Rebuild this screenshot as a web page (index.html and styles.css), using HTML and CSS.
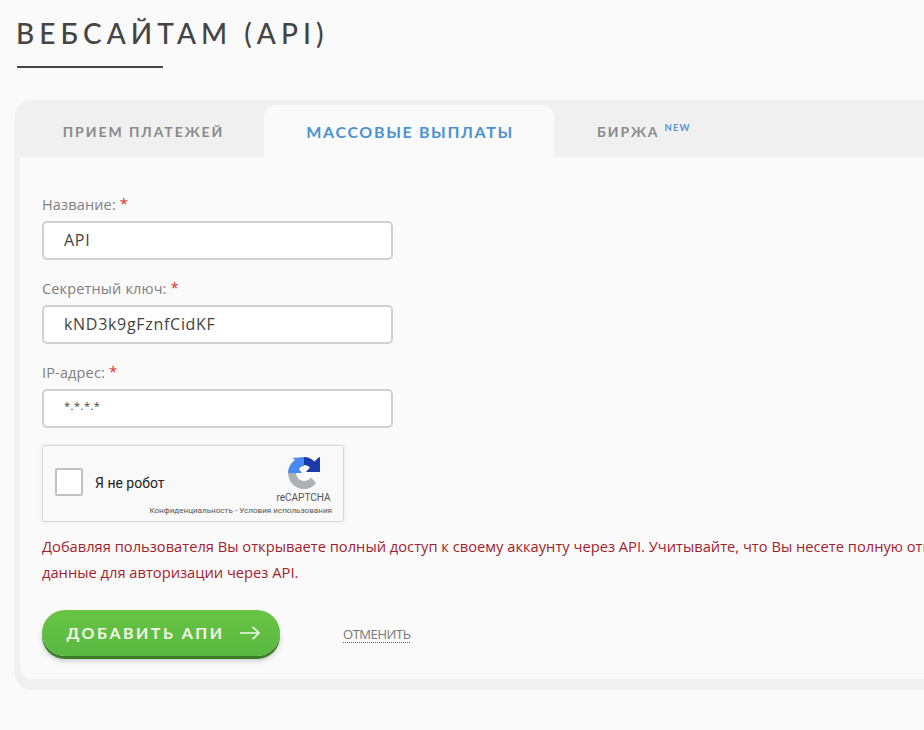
FILE: index.html
```html
<!DOCTYPE html>
<html lang="ru">
<head>
<meta charset="utf-8">
<title>API</title>
<link rel="stylesheet" href="styles.css">
</head>
<body>
<main class="page">
  <h1 class="title">ВЕБСАЙТАМ (API)</h1>
  <div class="rule"></div>
  <section class="panel">
    <nav class="tabs">
      <a class="tab tab-first">ПРИЕМ ПЛАТЕЖЕЙ</a>
      <a class="tab tab-active">МАССОВЫЕ ВЫПЛАТЫ</a>
      <a class="tab tab-last">БИРЖА<sup class="new">NEW</sup></a>
    </nav>
    <div class="body">
      <form class="form">
        <div class="field">
          <label class="label">Название: <span class="req">*</span></label>
          <div class="input">API</div>
        </div>
        <div class="field">
          <label class="label">Секретный ключ: <span class="req">*</span></label>
          <div class="input">kND3k9gFznfCidKF</div>
        </div>
        <div class="field field-last">
          <label class="label">IP-адрес: <span class="req">*</span></label>
          <div class="input input-ip">*.*.*.*</div>
        </div>
        <div class="captcha">
          <span class="check"></span>
          <span class="robot">Я не робот</span>
          <div class="brand">
            <svg class="logo" viewBox="0 0 32 32" width="32" height="32">
              <path fill="#abb0b5" d="M0 16H8C8.500 21 12 24 16 24C19 24 21.500 22.500 23 20.500L28 26C25 30 21 32 16 32C7 32 .5 25 0 16Z"/>
              <path fill="#4a8af0" d="M16 0V9C14 9 12 10 11 12L14 16H0C.5 10 3 6 7 3L4.500 1Z"/>
              <path fill="#1c3aa9" d="M16 0C20 0 24 2 26.500 4.500L30 1L32 0V15H18L22 10.500C20.500 9 18.500 8 16 8Z"/>
            </svg>
            <span class="brand-name">reCAPTCHA</span>
          </div>
          <span class="terms">Конфиденциальность - Условия использования</span>
        </div>
        <p class="warn">Добавляя пользователя Вы открываете полный доступ к своему аккаунту через API. Учитывайте, что Вы несете полную ответственность за<br>данные для авторизации через API.</p>
        <div class="actions">
          <button type="button" class="btn">ДОБАВИТЬ АПИ
            <svg class="arrow" viewBox="0 0 20 14" width="20" height="14"><path d="M0 7H19M12.500 .7L19 7L12.500 13.300" fill="none" stroke="#f3f8e8" stroke-width="1.600"/></svg>
          </button>
          <a class="cancel">ОТМЕНИТЬ</a>
        </div>
      </form>
    </div>
  </section>
</main>
</body>
</html>
```
FILE: styles.css
```css
* { box-sizing: border-box; }
html, body { margin: 0; height: 730px; overflow: hidden; background: #fafafa; }
body { font-family: "Open Sans", "Noto Sans", sans-serif; color: #444; }
.page { width: 1240px; padding: 15px 0 0 15px; }
.title {
  margin: 0 0 0 1px;
  font: 500 28px/36px Lato, "Noto Sans", sans-serif;
  letter-spacing: 5.050px;
  color: #444;
}
.rule { width: 146px; height: 2px; margin: 15px 0 0 2px; background: #444; }
.panel {
  margin-top: 32px;
  height: 590px;
  background: #f0f0f0;
  border-radius: 16px;
  padding: 5px 0 11px 5px;
  display: flex;
  flex-direction: column;
}
.tabs { display: flex; height: 52px; flex: none; }
.tab {
  font: 700 14px/52px Lato, "Noto Sans", sans-serif;
  letter-spacing: 1.950px;
  color: #8a8a8a;
  text-align: center;
  padding-top: 1px;
}
.tab-first { width: 244px; padding-left: 3px; }
.tab-active {
  width: 290px;
  background: #fafafa;
  border-radius: 12px 12px 0 0;
  color: #4a93d1;
  font-size: 16px;
  letter-spacing: 1.650px;
  padding-left: 2px;
}
.tab-last { padding-left: 43px; }
.new { font-size: 9.500px; line-height: 0; color: #5a94cf; letter-spacing: 1.200px; margin-left: 5px; vertical-align: 6px; }
.body { flex: 1; background: #fafafa; border-radius: 0 0 0 12px; padding: 38px 0 0 22px; }
.field { margin-bottom: 19px; }
.field-last { margin-bottom: 17px; }
.label { display: block; font-size: 14.500px; letter-spacing: .15px; line-height: 20px; color: #7f7f7f; height: 28px; margin-top: -2px; }
.req { color: #d8342c; font-size: 15px; vertical-align: 1px; }
.input {
  width: 351px;
  height: 39px;
  background: #fff;
  border: 2px solid #d0d0d0;
  border-radius: 5px;
  padding-left: 20px;
  font-size: 16px;
  letter-spacing: .7px;
  line-height: 35px;
  color: #444;
}
.input-ip { font-size: 11px; letter-spacing: .5px; line-height: 29px; }
.captcha {
  position: relative;
  width: 302px;
  height: 77px;
  background: #f9f9f9;
  border: 1px solid #d6d6d6;
  border-radius: 3px;
  box-shadow: 0 0 4px rgba(0, 0, 0, .08);
}
.check {
  position: absolute; left: 12px; top: 22px;
  width: 28px; height: 28px;
  background: #fff;
  border: 2px solid #c1c1c1;
  border-radius: 2px;
}
.robot { position: absolute; left: 52px; top: 29px; font: 14px/16px Roboto, sans-serif; color: #222; }
.brand { position: absolute; right: 9px; top: 11px; width: 60px; display: flex; flex-direction: column; align-items: center; }
.logo { display: block; }
.brand-name { font: 10px/12px Roboto, sans-serif; color: #555; margin-top: 3px; margin-right: 1px; }
.terms { position: absolute; right: 11px; top: 59px; font: 8.100px/10px Roboto, sans-serif; color: #555; white-space: nowrap; }
.warn {
  margin: 11px 0 0;
  white-space: nowrap;
  font-size: 14.700px;
  line-height: 26px;
  color: #a51d2d;
}
.actions { display: flex; align-items: center; margin-top: 25px; }
.btn {
  width: 238px;
  height: 46px;
  border: 0;
  border-radius: 23px;
  background: linear-gradient(#68c443, #58b840);
  box-shadow: 0 3px 0 #3a7d28, 0 5px 5px rgba(0, 0, 0, .2);
  font: 700 16px/46px Lato, "Noto Sans", sans-serif;
  letter-spacing: 2.500px;
  color: #f3f8e8;
  display: flex;
  align-items: center;
  justify-content: center;
  gap: 15px;
  padding: 0 0 0 4px;
}
.arrow { flex: none; }
.cancel {
  margin-left: 63px;
  font-size: 13px;
  line-height: 16px;
  letter-spacing: -.45px;
  color: #777;
  border-bottom: 1px dotted #666;
  margin-top: 2px;
}
```
